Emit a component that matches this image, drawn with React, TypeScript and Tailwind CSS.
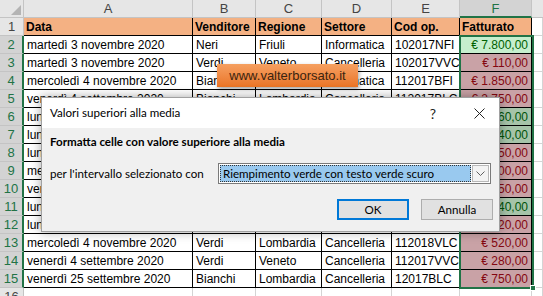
import React from 'react';

type Row = {
  cells: string[];
  above: boolean;
};

const colWidths = [169, 63, 66, 70, 68, 72];
const colNames = ['A', 'B', 'C', 'D', 'E', 'F'];

const rows: Row[] = [
  { cells: ['martedì 3 novembre 2020', 'Neri', 'Friuli', 'Informatica', '102017NFI', '€ 7.800,00'], above: true },
  { cells: ['martedì 3 novembre 2020', 'Verdi', 'Veneto', 'Cancelleria', '102017VVC', '€ 110,00'], above: false },
  { cells: ['mercoledì 4 novembre 2020', 'Bianchi', 'Friuli', 'Informatica', '112017BFI', '€ 1.850,00'], above: false },
  { cells: ['venerdì 4 settembre 2020', 'Bianchi', 'Lombardia', 'Cancelleria', '112017BLC', '€ 2.750,00'], above: false },
  { cells: ['lunedì 7 settembre 2020', 'Neri', 'Lombardia', 'Informatica', '092017NLI', '€ 3.560,00'], above: true },
  { cells: ['lunedì 12 ottobre 2020', 'Rossi', 'Piemonte', 'Informatica', '102017RPI', '€ 4.140,00'], above: true },
  { cells: ['lunedì 14 settembre 2020', 'Verdi', 'Veneto', 'Cancelleria', '092017VVC', '€ 950,00'], above: false },
  { cells: ['mercoledì 14 ottobre 2020', 'Rossi', 'Friuli', 'Cancelleria', '102017RFC', '€ 1.200,00'], above: false },
  { cells: ['venerdì 2 ottobre 2020', 'Bianchi', 'Veneto', 'Cancelleria', '102017BVC', '€ 650,00'], above: false },
  { cells: ['lunedì 19 ottobre 2020', 'Neri', 'Friuli', 'Informatica', '102017NFI', '€ 5.640,00'], above: true },
  { cells: ['lunedì 5 ottobre 2020', 'Verdi', 'Lombardia', 'Cancelleria', '102017VLC', '€ 420,00'], above: false },
  { cells: ['mercoledì 4 novembre 2020', 'Verdi', 'Lombardia', 'Cancelleria', '112018VLC', '€ 520,00'], above: false },
  { cells: ['venerdì 4 settembre 2020', 'Verdi', 'Veneto', 'Cancelleria', '112017VVC', '€ 280,00'], above: false },
  { cells: ['venerdì 25 settembre 2020', 'Bianchi', 'Lombardia', 'Cancelleria', '12017BLC', '€ 750,00'], above: false },
];

const headers = ['Data', 'Venditore', 'Regione', 'Settore', 'Cod op.', 'Fatturato'];

function RowHeader({ n, selected }: { n: number; selected: boolean }) {
  return (
    <div
      className={`w-[24px] h-[18px] shrink-0 border-b border-[#c4c4c4] text-center text-[13px] leading-[17px] ${
        selected
          ? 'bg-[#d3d3d3] text-[#217346] border-r-2 border-r-[#217346]'
          : 'bg-[#e6e6e6] text-[#444] border-r border-r-[#c4c4c4]'
      }`}
    >
      {n}
    </div>
  );
}

function GridFill() {
  return <div className="flex-1 h-[18px] border-b border-r border-[#d4d4d4]" />;
}

export default function App() {
  return (
    <div className="relative w-[543px] h-[296px] overflow-hidden bg-white font-['Liberation_Sans',Arial,sans-serif] text-[12px] text-black">
      {/* column headers */}
      <div className="flex h-[18px]">
        <div className="relative w-[24px] shrink-0 bg-[#e6e6e6] border-r border-b border-[#c4c4c4]">
          <svg className="absolute right-[2px] bottom-[2px]" width="10" height="10" viewBox="0 0 10 10">
            <polygon points="10,0 10,10 0,10" fill="#b4b4b4" />
          </svg>
        </div>
        {colNames.map((c, i) => (
          <div
            key={c}
            style={{ width: colWidths[i] }}
            className={`shrink-0 text-center text-[13px] leading-[17px] border-r border-[#c4c4c4] ${
              c === 'F'
                ? 'bg-[#d3d3d3] text-[#217346] border-b-2 border-b-[#217346]'
                : 'bg-[#e6e6e6] text-[#444] border-b border-b-[#c4c4c4]'
            }`}
          >
            {c}
          </div>
        ))}
        <div className="flex-1 bg-[#e6e6e6] border-b border-[#c4c4c4]" />
      </div>

      {/* row 1 */}
      <div className="flex">
        <RowHeader n={1} selected={false} />
        {headers.map((h, i) => (
          <div
            key={h}
            style={{ width: colWidths[i] }}
            className="shrink-0 h-[18px] px-[2px] bg-[#f4b183] font-bold leading-[18px] border-r border-b border-black whitespace-nowrap overflow-hidden"
          >
            {h}
          </div>
        ))}
        <GridFill />
      </div>

      {rows.map((r, ri) => {
        const active = ri === 0;
        return (
          <div key={ri} className="flex">
            <RowHeader n={ri + 2} selected />
            {r.cells.map((c, i) => {
              const isF = i === 5;
              let cls = 'bg-white text-black';
              if (isF) {
                if (active) cls = 'bg-[#c6efce] text-[#006100] text-right';
                else if (r.above) cls = 'bg-[#a6c4a9] text-[#00530a] text-right';
                else cls = 'bg-[#c9a2a6] text-[#840710] text-right';
              }
              return (
                <div
                  key={i}
                  style={{ width: colWidths[i] }}
                  className={`shrink-0 h-[18px] px-[3px] leading-[18px] border-r border-b border-black whitespace-nowrap overflow-hidden ${cls}`}
                >
                  {c}
                </div>
              );
            })}
            <GridFill />
          </div>
        );
      })}

      {/* row 16 */}
      <div className="flex">
        <RowHeader n={16} selected={false} />
        {colWidths.map((w, i) => (
          <div key={i} style={{ width: w }} className="shrink-0 h-[18px] border-r border-b border-[#d4d4d4]" />
        ))}
        <GridFill />
      </div>

      {/* selection border on F2:F15 */}
      <div className="absolute left-[459px] top-[35px] w-[75px] h-[254px] border-2 border-[#217346] pointer-events-none" />
      <div className="absolute left-[530px] top-[285px] w-[6px] h-[6px] bg-[#217346] border border-white" />

      {/* watermark */}
      <div className="absolute left-[217px] top-[64px] w-[141px] h-[23px] bg-gradient-to-b from-[#f5a060] to-[#ea7424] shadow-[1px_2px_4px_rgba(0,0,0,0.35)] text-center text-[13px] leading-[23px] text-[#3b2410]">
        www.valterborsato.it
      </div>

      {/* dialog */}
      <div className="absolute left-[41px] top-[97px] w-[459px] h-[135px] bg-[#f0f0f0] border border-[#a0a0a0] shadow-[0_0_10px_rgba(0,0,0,0.35)] font-['Lato',sans-serif] text-[11.6px] text-black">
        <div className="h-[30px] bg-white flex items-center pl-[8px] pr-[14px]">
          <span className="flex-1">Valori superiori alla media</span>
          <span className="text-[14px] text-[#222] mr-[38px]">?</span>
          <svg width="11" height="11" viewBox="0 0 11 11">
            <path d="M0.5 0.5 L10.5 10.5 M10.5 0.5 L0.5 10.5" stroke="#222" strokeWidth="1" />
          </svg>
        </div>
        <div className="px-[8px] pt-[6px]">
          <div className="font-bold leading-[16px]">Formatta celle con valore superiore alla media</div>
          <div className="flex items-center mt-[13px]">
            <span className="w-[168px] shrink-0">per l'intervallo selezionato con</span>
            <div className="w-[275px] h-[21px] bg-white border border-[#7a7a7a] flex items-center p-[1px]">
              <div className="flex-1 h-full bg-[#99c9ef] border border-dotted border-[#333] px-[2px] leading-[15px] whitespace-nowrap overflow-hidden">
                Riempimento verde con testo verde scuro
              </div>
              <div className="w-[17px] h-full ml-[1px] bg-[#f3f3f3] border border-[#b8b8b8] flex items-center justify-center">
                <svg width="9" height="5" viewBox="0 0 9 5">
                  <path d="M0.5 0.5 L4.5 4.5 L8.5 0.5" fill="none" stroke="#606060" strokeWidth="1" />
                </svg>
              </div>
            </div>
          </div>
          <div className="flex justify-end gap-[12px] mt-[15px]">
            <button className="w-[72px] h-[21px] bg-[#e1e1e1] border-2 border-[#0078d7] leading-[17px]">OK</button>
            <button className="w-[72px] h-[21px] bg-[#e1e1e1] border border-[#adadad] leading-[19px] mr-[-2px]">Annulla</button>
          </div>
        </div>
      </div>
    </div>
  );
}
